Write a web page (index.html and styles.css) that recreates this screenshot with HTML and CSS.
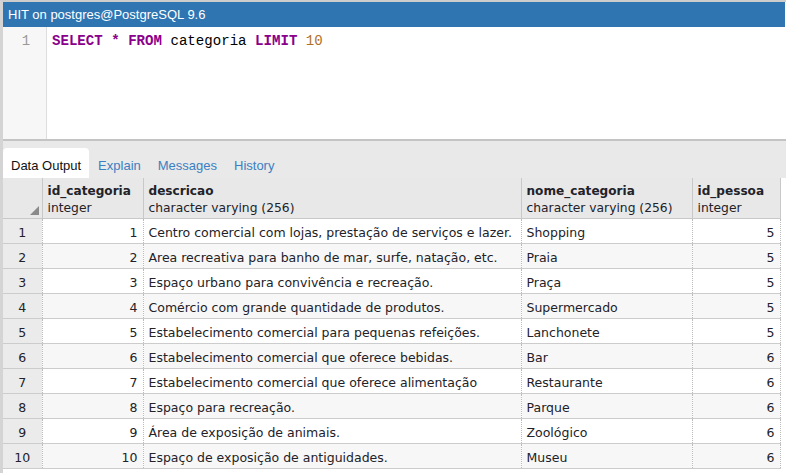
FILE: index.html
```html
<!DOCTYPE html>
<html>
<head>
<meta charset="utf-8">
<link rel="stylesheet" href="styles.css">
</head>
<body>
<div class="app">
  <div class="titlebar">HIT on postgres@PostgreSQL 9.6</div>
  <div class="editor">
    <div class="gutter"><div class="lineno">1</div></div>
    <div class="code"><span class="kw">SELECT</span> <span class="kw">*</span> <span class="kw">FROM</span> categoria <span class="kw">LIMIT</span> <span class="num">10</span></div>
  </div>
  <div class="tabbar">
    <div class="tab active">Data Output</div>
    <div class="tab">Explain</div>
    <div class="tab">Messages</div>
    <div class="tab">History</div>
  </div>
  <table class="grid">
    <colgroup>
      <col class="c0"><col class="c1"><col class="c2"><col class="c3"><col class="c4"><col>
    </colgroup>
    <thead>
      <tr>
        <th class="corner"><span class="tri"></span></th>
        <th><b>id_categoria</b><span>integer</span></th>
        <th><b>descricao</b><span>character varying (256)</span></th>
        <th><b>nome_categoria</b><span>character varying (256)</span></th>
        <th><b>id_pessoa</b><span>integer</span></th>
        <th class="blank"></th>
      </tr>
    </thead>
    <tbody>
      <tr><td class="rn">1</td><td class="r">1</td><td>Centro comercial com lojas, prestação de serviços e lazer.</td><td>Shopping</td><td class="r">5</td><td class="blank"></td></tr>
      <tr><td class="rn">2</td><td class="r">2</td><td>Area recreativa para banho de mar, surfe, natação, etc.</td><td>Praia</td><td class="r">5</td><td class="blank"></td></tr>
      <tr><td class="rn">3</td><td class="r">3</td><td>Espaço urbano para convivência e recreação.</td><td>Praça</td><td class="r">5</td><td class="blank"></td></tr>
      <tr><td class="rn">4</td><td class="r">4</td><td>Comércio com grande quantidade de produtos.</td><td>Supermercado</td><td class="r">5</td><td class="blank"></td></tr>
      <tr><td class="rn">5</td><td class="r">5</td><td>Estabelecimento comercial para pequenas refeições.</td><td>Lanchonete</td><td class="r">5</td><td class="blank"></td></tr>
      <tr><td class="rn">6</td><td class="r">6</td><td>Estabelecimento comercial que oferece bebidas.</td><td>Bar</td><td class="r">6</td><td class="blank"></td></tr>
      <tr><td class="rn">7</td><td class="r">7</td><td>Estabelecimento comercial que oferece alimentação</td><td>Restaurante</td><td class="r">6</td><td class="blank"></td></tr>
      <tr><td class="rn">8</td><td class="r">8</td><td>Espaço para recreação.</td><td>Parque</td><td class="r">6</td><td class="blank"></td></tr>
      <tr><td class="rn">9</td><td class="r">9</td><td>Área de exposição de animais.</td><td>Zoológico</td><td class="r">6</td><td class="blank"></td></tr>
      <tr><td class="rn">10</td><td class="r">10</td><td>Espaço de exposição de antiguidades.</td><td>Museu</td><td class="r">6</td><td class="blank"></td></tr>
    </tbody>
  </table>
</div>
</body>
</html>
```
FILE: styles.css
```css
html, body {
  margin: 0;
  padding: 0;
  background: #ffffff;
}
.app {
  width: 783px;
  height: 471px;
  border-top: 2px solid #cdcdcd;
  border-left: 3px solid #d4d4d4;
  overflow: hidden;
}
.titlebar {
  height: 25px;
  background: #2e75b2;
  color: #ffffff;
  font-family: "Liberation Sans", Arial, sans-serif;
  font-size: 13px;
  line-height: 25px;
  padding-left: 5px;
  margin-right: 1px;
}
.editor {
  display: flex;
  height: 112px;
  background: #ffffff;
}
.gutter {
  width: 43px;
  background: #f7f7f7;
  border-right: 1px solid #dddddd;
}
.lineno {
  font-family: "Liberation Mono", monospace;
  font-size: 14px;
  line-height: 20px;
  color: #999999;
  text-align: center;
  padding-top: 4px;
  padding-left: 3px;
}
.code {
  font-family: "Liberation Mono", "Courier New", monospace;
  font-size: 14.1px;
  line-height: 20px;
  padding-top: 4px;
  padding-left: 5px;
  color: #000000;
  white-space: pre;
}
.kw {
  color: #8b008b;
  font-weight: bold;
}
.num {
  color: #b0702a;
}
.tabbar {
  display: flex;
  align-items: flex-end;
  gap: 1px;
  height: 37px;
  background: #e9e9e9;
  border-top: 2px solid #c4c4c4;
}
.tab {
  height: 30px;
  line-height: 36px;
  padding: 0 8px;
  font-family: "Liberation Sans", Arial, sans-serif;
  font-size: 13px;
  color: #3b80c2;
  border-radius: 4px 4px 0 0;
}
.tab.active {
  background: #ffffff;
  color: #111111;
}
.grid {
  border-collapse: collapse;
  table-layout: fixed;
  width: 783px;
  font-family: "DejaVu Sans", Verdana, sans-serif;
  font-size: 12.5px;
  color: #222228;
}
.c0 { width: 39px; }
.c1 { width: 101px; }
.c2 { width: 378px; }
.c3 { width: 171px; }
.c4 { width: 88px; }
.grid th {
  height: 39px;
  background: #e8e8e8;
  border-right: 1px solid #c8c8c8;
  border-bottom: 1px solid #c8c8c8;
  text-align: left;
  vertical-align: bottom;
  padding: 0 5px 1px 5px;
  font-weight: normal;
  line-height: 17px;
  position: relative;
  font-size: 12.3px;
}
.grid th b {
  display: block;
  font-weight: bold;
  font-size: 12.1px;
}
.grid th span {
  display: block;
}
.grid th.corner {
  padding: 0;
}
.tri {
  position: absolute;
  right: 3px;
  bottom: 3px;
  width: 0;
  height: 0;
  border-left: 9px solid transparent;
  border-bottom: 9px solid #8a8a8a;
}
.grid th.blank, .grid td.blank {
  background: #ffffff;
  border: none;
}
.grid td {
  height: 21px;
  line-height: 16px;
  padding: 3px 5px 0 5px;
  border-bottom: 1px solid #cccccc;
  border-right: 1px dotted #bbbbbb;
  white-space: nowrap;
  overflow: hidden;
  background: #ffffff;
  vertical-align: middle;
}
.grid tbody tr:nth-child(even) td {
  background: #f7f7f7;
}
.grid td.rn {
  background: #ebebeb;
  text-align: center;
  padding: 3px 0 0 0;
}
.grid tbody tr:nth-child(even) td.rn {
  background: #ebebeb;
}
.grid tbody tr:nth-child(even) td.blank {
  background: #ffffff;
}
.grid td.r {
  text-align: right;
}
```
